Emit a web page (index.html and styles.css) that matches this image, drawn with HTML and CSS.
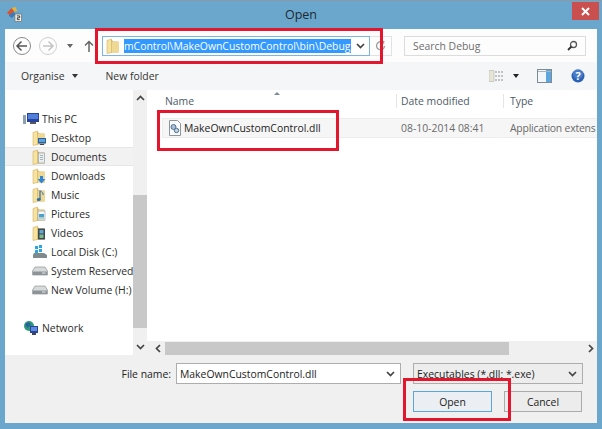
FILE: index.html
```html
<!DOCTYPE html>
<html lang="en">
<head>
<meta charset="utf-8">
<title>Open</title>
<link rel="stylesheet" href="styles.css">
</head>
<body>
<svg class="defs" width="0" height="0">
  <symbol id="folder" viewBox="0 0 14 16">
    <path d="M2 2h4l1 1.500h5.500v11H2z" fill="#d9b566"/>
    <path d="M5 4h8v10.500H5z" fill="#efd794"/>
    <path d="M1 2.500l4.500-1.500v13.500l-4.500 1z" fill="#f7e3a0" stroke="#c9a24d" stroke-width=".5"/>
  </symbol>
  <symbol id="drive" viewBox="0 0 16 10">
    <path d="M3 1h10l2.500 4v4H.5V5z" fill="#d7dadb" stroke="#8f9496" stroke-width=".7"/>
    <path d="M1 5.500h14V9H1z" fill="#8c9498"/>
    <path d="M10 6.500h3.500v1H10z" fill="#e4e7e8"/>
  </symbol>
  <symbol id="chev" viewBox="0 0 9 6">
    <path d="M1 1l3.500 3.500L8 1" fill="none" stroke="#444" stroke-width="1.700"/>
  </symbol>
</svg>
<div class="window">
  <header class="titlebar">
    <svg class="app-icon" width="15" height="15" viewBox="0 0 16 16">
      <path d="M0 6l5-5 3 3-5 5z" fill="#d8562f"/>
      <path d="M5 1l4-1 2 4-3 1z" fill="#e4b536"/>
      <path d="M2 9l5-4 2 3-4 4z" fill="#3f78b8"/>
      <rect x="8.500" y="7.500" width="7" height="8" fill="#f3f3ee" stroke="#666" stroke-width=".7"/>
      <path d="M10.500 9.500h3v2h-2.500v2h2.500" fill="none" stroke="#333"/>
    </svg>
    <span class="title">Open</span>
    <span class="close">
      <svg width="9" height="9" viewBox="0 0 9 9"><path d="M1 1l7 7M8 1L1 8" stroke="#fff" stroke-width="2"/></svg>
    </span>
  </header>
  <div class="client">
    <div class="navbar">
      <span class="round back"><svg width="14" height="12" viewBox="0 0 14 12"><path d="M6.500 1.500L2 6l4.500 4.500M2 6h10" fill="none" stroke="#555" stroke-width="1.500"/></svg></span>
      <span class="round fwd"><svg width="14" height="12" viewBox="0 0 14 12"><path d="M7.500 1.500L12 6l-4.500 4.500M12 6H2" fill="none" stroke="#c4c4c4" stroke-width="1.500"/></svg></span>
      <span class="caret recent"></span>
      <svg class="up" width="10" height="12" viewBox="0 0 10 12"><path d="M1 5.500L5 1.500l4 4M5 2v10" fill="none" stroke="#666" stroke-width="1.500"/></svg>
      <div class="address">
        <svg class="addr-folder" width="14" height="16"><use href="#folder"/></svg>
        <span class="path"><span class="selected">mControl\MakeOwnCustomControl\bin\Debug</span></span>
        <svg class="chev-icon" width="9" height="6"><use href="#chev"/></svg>
      </div>
      <span class="refresh"><svg width="11" height="11" viewBox="0 0 11 11"><path d="M8.800 3.500A4 4 0 1 0 9.500 6" fill="none" stroke="#9a9a9a" stroke-width="1.300"/><path d="M6.500 .5l3 .5-.5 3z" fill="#9a9a9a"/></svg></span>
      <div class="search">
        <span>Search Debug</span>
        <svg width="11" height="11" viewBox="0 0 11 11"><circle cx="6.500" cy="4.500" r="3" fill="none" stroke="#555" stroke-width="1.300"/><path d="M4.500 6.500L1 10" stroke="#333" stroke-width="1.800"/></svg>
      </div>
    </div>
    <div class="toolbar">
      <span class="tool organise">Organise<span class="caret"></span></span>
      <span class="tool">New folder</span>
      <span class="toolbar-right">
        <svg width="15" height="12" viewBox="0 0 15 12"><path d="M0 .5h5v11H0z" fill="#e6e4d6" stroke="#b9b8aa" stroke-width=".6"/><path d="M6 2h9M6 6h9M6 10h9" stroke="#8b9099" stroke-dasharray="2 1"/></svg>
        <span class="caret"></span>
        <svg class="pane" width="15" height="14" viewBox="0 0 15 14"><rect x=".5" y=".5" width="14" height="13" fill="#f4f7f9" stroke="#7d8b96"/><rect x="9" y="1" width="5" height="12" fill="#5ea7de"/><path d="M1 2.500h13" stroke="#aab4bb"/></svg>
        <svg class="help" width="14" height="14" viewBox="0 0 14 14"><circle cx="7" cy="7" r="6.500" fill="#2b62b5"/><circle cx="7" cy="5" r="5" fill="#5f8fd6" opacity=".6"/><text x="7" y="11" class="help-mark">?</text></svg>
      </span>
    </div>
    <div class="browser">
      <nav class="sidebar">
        <ul class="tree">
          <li class="node root">
            <svg width="16" height="14" viewBox="0 0 16 14"><rect x="4" y="1" width="12" height="9" fill="#27439c"/><rect x="5" y="2" width="10" height="5" fill="#4f7fd8"/><path d="M7 10h6v2H7z" fill="#556"/><rect y="3" width="3" height="9" fill="#8fa0ad"/></svg>
            This PC
          </li>
          <li class="node">
            <svg width="14" height="16" viewBox="0 0 14 16"><use href="#folder" width="14" height="16"/><rect x="6" y="8" width="8" height="5.500" fill="#2b5f9e"/><rect x="7" y="9" width="6" height="3" fill="#59a4dc"/><path d="M8 14h4v1H8z" fill="#445"/></svg>Desktop
          </li>
          <li class="node current">
            <svg width="14" height="16" viewBox="0 0 14 16"><use href="#folder" width="14" height="16"/><rect x="6.500" y="4" width="6" height="10" fill="#e9eef2" stroke="#8e9aa5" stroke-width=".6"/><path d="M8 6.500h3M8 8.500h3M8 10.500h3" stroke="#8e9aa5" stroke-width=".7"/></svg>Documents
          </li>
          <li class="node">
            <svg width="14" height="16" viewBox="0 0 14 16"><use href="#folder" width="14" height="16"/><path d="M8 8h3v3h2.500L9.500 15.500 5.500 11H8z" fill="#2f86d6"/></svg>Downloads
          </li>
          <li class="node">
            <svg width="14" height="16" viewBox="0 0 14 16"><use href="#folder" width="14" height="16"/><path d="M8 3.500v9" stroke="#2b6fa8" stroke-width="1.200"/><path d="M8.500 4c1.500 1 3 2 2.500 4" fill="none" stroke="#2b6fa8"/><ellipse cx="6.800" cy="12.500" rx="2" ry="1.600" fill="#2b6fa8"/></svg>Music
          </li>
          <li class="node">
            <svg width="14" height="16" viewBox="0 0 14 16"><use href="#folder" width="14" height="16"/><rect x="6" y="5" width="7" height="9" fill="#f4f6f7" stroke="#8e9aa5" stroke-width=".6"/><rect x="7" y="8" width="5" height="3" fill="#4aa0cf"/><path d="M7 12h5" stroke="#6a8" /></svg>Pictures
          </li>
          <li class="node">
            <svg width="14" height="16" viewBox="0 0 14 16"><use href="#folder" width="14" height="16"/><rect x="6" y="3.500" width="7" height="11" fill="#3e4a52"/><rect x="7.500" y="5" width="4" height="3.500" fill="#63a6cf"/><rect x="7.500" y="9.500" width="4" height="3.500" fill="#7fb98f"/></svg>Videos
          </li>
          <li class="node wide">
            <svg width="16" height="14" viewBox="0 0 16 14"><path d="M3 1h3v3H3zM7 0h3v3H7zM3 5h3v3H3zM7 4h3v3H7z" fill="#29a7e3"/><path d="M2 8h10l3 2v3H1v-3z" fill="#7f8a8d"/></svg>
            Local Disk (C:)
          </li>
          <li class="node wide">
            <svg width="16" height="10"><use href="#drive"/></svg>System Reserved
          </li>
          <li class="node wide">
            <svg width="16" height="10"><use href="#drive"/></svg>New Volume (H:)
          </li>
          <li class="node root network">
            <svg width="16" height="16" viewBox="0 0 16 16"><circle cx="6" cy="6" r="5" fill="#2e9a78"/><path d="M2 4l4-2 2 3-4 3z" fill="#27649f"/><rect x="7" y="6" width="8" height="7" fill="#27439c"/><rect x="8" y="7" width="6" height="4" fill="#5d8ce0"/><path d="M9 13h4v2H9z" fill="#445"/></svg>
            Network
          </li>
        </ul>
        <div class="vscroll">
          <svg class="arrow" width="9" height="6"><use href="#chev"/></svg>
          <span class="vtrack"></span>
          <svg class="arrow-down" width="9" height="6"><use href="#chev"/></svg>
        </div>
      </nav>
      <section class="files">
        <span class="sort-mark"></span>
        <div class="file-head">
          <span class="col-name">Name</span>
          <span class="col-date">Date modified</span>
          <span class="col-type">Type</span>
        </div>
        <div class="file-row">
          <span class="col-name file-name">
            <svg width="14" height="16" viewBox="0 0 14 16"><path d="M1.500.5h8l3 3v12h-11z" fill="#fbfcfd" stroke="#8d959c"/><circle cx="5.500" cy="7" r="2.500" fill="#a9c0d8" stroke="#50708f"/><circle cx="8.500" cy="10.500" r="2.200" fill="#c3d2e0" stroke="#50708f"/></svg>
            MakeOwnCustomControl.dll
          </span>
          <span class="col-date">08-10-2014 08:41</span>
          <span class="col-type">Application extens</span>
        </div>
        <div class="hscroll">
          <svg class="arrow-left" width="6" height="9" viewBox="0 0 6 9"><path d="M5 1L1.500 4.500 5 8" fill="none" stroke="#444" stroke-width="1.700"/></svg>
          <span class="htrack"></span>
          <svg class="arrow-right" width="6" height="9" viewBox="0 0 6 9"><path d="M1 1l3.500 3.500L1 8" fill="none" stroke="#444" stroke-width="1.700"/></svg>
        </div>
      </section>
    </div>
    <div class="footer">
      <div class="footer-row">
        <label class="field-label">File name:</label>
        <div class="combo name-combo">
          <span>MakeOwnCustomControl.dll</span>
          <svg width="9" height="6"><use href="#chev"/></svg>
        </div>
        <div class="combo type-combo">
          <span>Executables (*.dll; *.exe)</span>
          <svg width="9" height="6"><use href="#chev"/></svg>
        </div>
      </div>
      <div class="footer-row buttons">
        <button class="btn default">Open</button>
        <button class="btn">Cancel</button>
      </div>
    </div>
  </div>
  <span class="mark mark-address"></span>
  <span class="mark mark-file"></span>
  <span class="mark mark-open"></span>
</div>
</body>
</html>
```
FILE: styles.css
```css
* { box-sizing: border-box; }
html, body { margin: 0; padding: 0; }
body { font-family: "Open Sans", "Noto Sans", sans-serif; font-size: 10.4px; color: #2b2b2b; overflow: hidden; }
.defs { position: absolute; }
.window { position: relative; width: 602px; height: 429px; background: #6ba7cd; border-top: 1px solid #8a9aa6; display: flex; flex-direction: column; padding: 0 5px 6px; }
.titlebar { height: 28px; flex: none; display: flex; align-items: center; justify-content: center; position: relative; padding-bottom: 2px; }
.app-icon { position: absolute; left: 2px; top: 6px; }
.title { font-size: 12.500px; color: #1d2a33; }
.close { position: absolute; right: -2px; top: 1px; width: 27px; height: 18px; background: #c9504f; display: flex; align-items: center; justify-content: center; }
.client { flex: 1; min-height: 0; background: #fff; display: flex; flex-direction: column; }
.navbar { height: 33px; flex: none; display: flex; align-items: center; padding-left: 8px; background: #fdfdfd; }
.round { width: 18px; height: 18px; border-radius: 50%; display: flex; align-items: center; justify-content: center; flex: none; }
.back { border: 1.500px solid #8a8a8a; }
.fwd { border: 1.500px solid #cfcfcf; margin-left: 8px; }
.caret { display: inline-block; width: 0; height: 0; border: 3.500px solid transparent; border-top: 4px solid #333; border-bottom: 0; flex: none; }
.recent { margin-left: 10px; border-top-color: #666; }
.up { margin-left: 11px; flex: none; }
.address { margin-left: 8px; width: 268px; height: 20px; border: 1px solid #7fb4e0; display: flex; align-items: center; background: #fff; flex: none; }
.addr-folder { margin-left: 3px; flex: none; }
.path { margin-left: 4px; flex: 1; min-width: 0; overflow: hidden; white-space: nowrap; }
.selected { background: #3399ff; color: #fff; display: inline-block; line-height: 14px; }
.chev-icon { margin: 0 4px 0 5px; flex: none; }
.refresh { width: 22px; height: 20px; border: 1px solid #e2e2e2; border-left: 0; display: flex; align-items: center; justify-content: center; flex: none; }
.search { margin-left: 12px; width: 182px; height: 20px; border: 1px solid #dcdcdc; display: flex; align-items: center; justify-content: space-between; padding: 0 7px 0 8px; color: #6d6d6d; flex: none; }
.toolbar { height: 28px; flex: none; background: #f5f6f7; display: flex; align-items: center; padding-left: 16px; color: #333; }
.tool { display: flex; align-items: center; }
.organise { gap: 7px; margin-right: 28px; }
.toolbar-right { margin-left: auto; display: flex; align-items: center; padding-right: 12px; }
.toolbar-right .caret { margin-left: 9px; border-top-color: #222; }
.pane { margin-left: 18px; }
.help { margin-left: 19px; }
.help-mark { font-size: 11px; font-weight: 700; fill: #fff; text-anchor: middle; }
.browser { flex: 1; min-height: 0; display: flex; }
.sidebar { width: 142px; flex: none; display: flex; }
.tree { list-style: none; margin: 0; padding: 19px 0 0; flex: 1; min-width: 0; overflow: hidden; }
.node { height: 19px; display: flex; align-items: center; gap: 5px; padding-left: 27px; white-space: nowrap; border: 1px solid transparent; border-width: 1px 0; }
.node svg { flex: none; }
.node.wide { gap: 3px; }
.node.root { padding-left: 18px; gap: 3px; }
.node.current { background: #f2f2f2; border-color: #e7e7e7; }
.network { margin-top: 19px; }
.vscroll { width: 14px; flex: none; background: #f0f0f0; display: flex; flex-direction: column; align-items: center; position: relative; }
.arrow { transform: rotate(180deg); margin-top: 5px; flex: none; }
.vtrack { width: 100%; flex: 1; margin: 94px 0 16px; background: #c8c8c8; }
.arrow-down { margin-bottom: 5px; flex: none; }
.files { flex: 1; min-width: 0; display: flex; flex-direction: column; position: relative; }
.sort-mark { position: absolute; left: 127px; top: 2px; width: 0; height: 0; border: 3px solid transparent; border-top: 0; border-bottom: 3px solid #7a8a9a; }
.file-head { height: 22px; display: flex; align-items: center; color: #4d5a68; flex: none; }
.col-name { width: 249px; padding-left: 18px; flex: none; }
.col-date { width: 107px; padding-left: 4px; flex: none; border-left: 1px solid #e5e5e5; }
.col-type { padding-left: 6px; flex: 1; min-width: 0; border-left: 1px solid #e5e5e5; white-space: nowrap; }
.file-row { height: 20px; margin: 6px 0 0 15px; background: #f6f6f6; border: 1px solid #ededed; border-right: 0; display: flex; align-items: center; flex: none; color: #6a6a6a; }
.file-row .col-name { width: 234px; padding-left: 5px; display: flex; align-items: center; gap: 2px; color: #222; }
.file-row .col-date { border-left: 0; padding-left: 4px; }
.file-row .col-type { border-left: 0; padding-left: 6px; letter-spacing: -.2px; }
.hscroll { margin-top: auto; height: 14px; background: #f0f0f0; display: flex; align-items: center; flex: none; padding: 0 3px 0 8px; }
.htrack { flex: 1; height: 13px; background: #c8c8c8; margin: 0 79px 0 4px; }
.footer { height: 68px; flex: none; background: #f0f0f0; display: flex; flex-direction: column; padding: 8px 14px 0 0; }
.footer-row { display: flex; align-items: center; justify-content: flex-end; }
.field-label { margin-right: 5px; color: #222; }
.combo { height: 21px; border: 1px solid #adadad; display: flex; align-items: center; justify-content: space-between; padding: 0 5px 0 3px; color: #222; }
.name-combo { width: 225px; background: #fff; }
.type-combo { width: 170px; margin-left: 12px; background: #ededed; }
.buttons { margin-top: 7px; padding-right: 1px; }
.btn { font: inherit; color: #222; width: 78px; height: 21px; background: #ececec; border: 1px solid #ababab; padding: 0; margin-left: 13px; }
.btn.default { width: 79px; border-color: #5aa7dc; background: #ebeff3; margin-left: 0; margin-right: -1px; }
.mark { position: absolute; border: 3px solid #e2162c; pointer-events: none; }
.mark-address { left: 95px; top: 27px; width: 288px; height: 36px; }
.mark-file { left: 157px; top: 109px; width: 182px; height: 41px; }
.mark-open { left: 403px; top: 377px; width: 108px; height: 43px; }
```
